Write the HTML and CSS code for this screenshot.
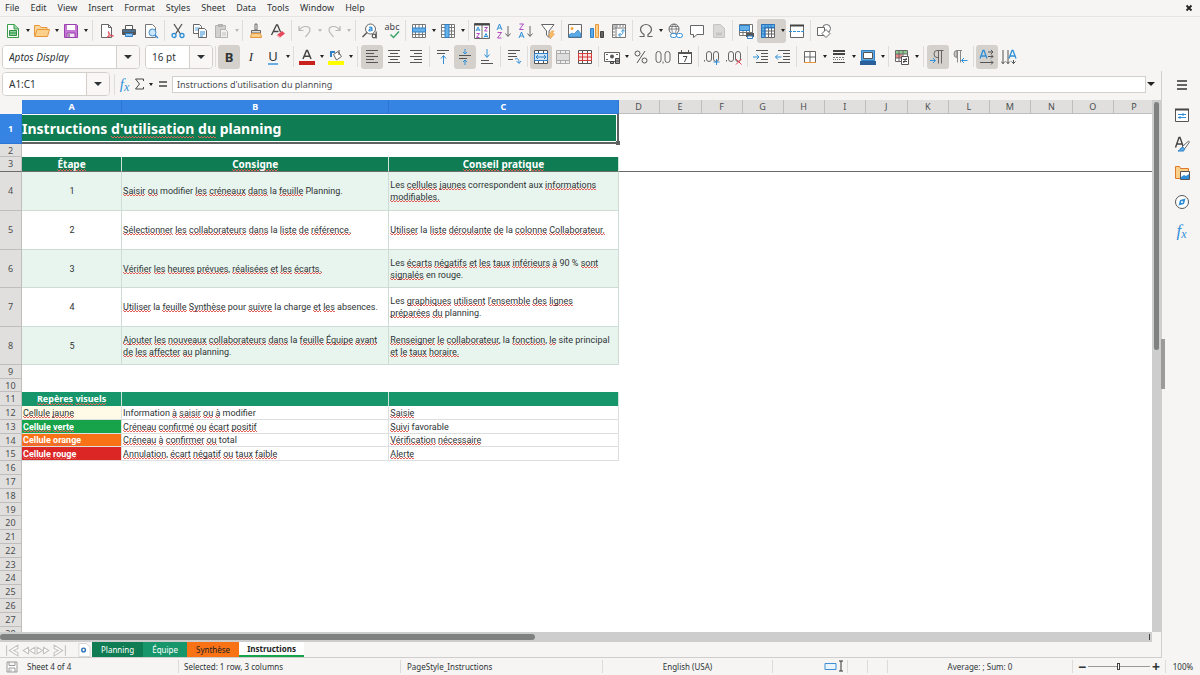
FILE: index.html
```html
<!DOCTYPE html>
<html lang="fr">
<head>
<meta charset="utf-8">
<title>Planning</title>
<link rel="stylesheet" href="styles.css">
</head>
<body>
<nav class="menubar">
<button>File</button><button>Edit</button><button>View</button><button>Insert</button><button>Format</button><button>Styles</button><button>Sheet</button><button>Data</button><button>Tools</button><button>Window</button><button>Help</button>
<button class="close" aria-label="Close"><svg class="i-close" viewBox="0 0 8 8"><path d="M1.500 1.500l5 5M6.500 1.500l-5 5" stroke="#222" stroke-width="1.800"/></svg></button>
</nav>

<div class="toolbar toolbar-standard" role="toolbar" aria-label="Standard">
<button class="tool" aria-label="New"><svg viewBox="0 0 16 16"><path d="M2.500 1.500h7l4 4v9h-11z" fill="#fff" stroke="#3a9d4b"/><path d="M9 1v5h5" fill="#9fd6a9" stroke="#3a9d4b"/><path d="M4.500 7.500h7v5h-7zM4.500 10h7" fill="#8ed09a" stroke="#2f8f43"/></svg></button><button class="drop" aria-label="New options"></button>
<button class="tool" aria-label="Open"><svg viewBox="0 0 16 16"><path d="M.5 13V2.500h5l1.500 2h6v2.500" fill="#fbd79b" stroke="#e8963a"/><path d="M.8 13.500L3 6.500h12.500l-2 7z" fill="#fbd08a" stroke="#e8963a"/></svg></button><button class="drop" aria-label="Open options"></button>
<button class="tool" aria-label="Save"><svg viewBox="0 0 16 16"><path d="M1.500 1.500h12l1 1v12h-13z" fill="#c679d4" stroke="#9a3fae"/><path d="M4 2h8v5H4z" fill="#fff"/><path d="M4 10h8v4.500H4z" fill="#f3e3f6" stroke="#9a3fae"/><path d="M6 11v3" stroke="#444"/></svg></button><button class="drop" aria-label="Save options"></button>
<span class="sep wide"></span>
<button class="tool" aria-label="Export as PDF"><svg viewBox="0 0 16 16"><path d="M2.500 1.500h7l3 3v10h-10z" fill="#fff" stroke="#666"/><path d="M9.500 1.500v3h3" fill="none" stroke="#666"/><path d="M8 14.500c3-2 2-6 1.500-6s0 4 5 4.500c-2-1-5 0-6.500 1.500z" fill="none" stroke="#e0404e"/></svg></button>
<button class="tool" aria-label="Print"><svg viewBox="0 0 16 16"><path d="M4.500 6V2.500h7V6" fill="#fff" stroke="#555"/><rect x="1" y="6" width="14" height="6" rx="1" fill="#555"/><path d="M2 8h12" stroke="#3b8fd6"/><path d="M4.500 10.500h7v3h-7z" fill="#8fc3ec" stroke="#2f7fc4"/></svg></button>
<button class="tool" aria-label="Print preview"><svg viewBox="0 0 16 16"><path d="M2.500 1.500h7l3 3v10h-10z" fill="#fff" stroke="#777"/><circle cx="9.500" cy="9.500" r="3.500" fill="#cfe6f8" stroke="#3b8fd6"/><path d="M12 12l3 3" stroke="#3b8fd6" stroke-width="1.500"/></svg></button>
<span class="sep"></span>
<button class="tool" aria-label="Cut"><svg viewBox="0 0 16 16"><path d="M4 1l6.500 10M12 1L5.500 11" stroke="#555" stroke-width="1.300" fill="none"/><circle cx="4" cy="12.500" r="2" fill="none" stroke="#2f8fd8" stroke-width="1.300"/><circle cx="12" cy="12.500" r="2" fill="none" stroke="#2f8fd8" stroke-width="1.300"/></svg></button>
<button class="tool" aria-label="Copy"><svg viewBox="0 0 16 16"><path d="M1.500 1.500h6l2 2v7h-8z" fill="#fff" stroke="#666"/><path d="M3 5h5M3 7h5" stroke="#5aa7df"/><path d="M6.500 5.500h6l2 2v7h-8z" fill="#fff" stroke="#666"/><path d="M8 9h5M8 11h5M8 13h3" stroke="#2f8fd8"/></svg></button>
<button class="tool" disabled aria-label="Paste"><svg viewBox="0 0 16 16"><path d="M1.500 2.500h10v12h-10z" fill="#d2d0ce" stroke="#b5b3b1"/><path d="M4 1h5v3H4z" fill="#b5b3b1"/><path d="M6.500 6.500h5l2 2v6h-7z" fill="#f2f1f0" stroke="#b5b3b1"/><path d="M8 10h4M8 12h4" stroke="#c3c1bf"/></svg></button><button class="drop" disabled aria-label="Paste options"></button>
<span class="sep"></span>
<button class="tool" aria-label="Clone formatting"><svg viewBox="0 0 16 16"><path d="M7 1h2v6H7z" fill="#fff" stroke="#666"/><path d="M3.500 7.500h9v2.500h-9z" fill="#ddd" stroke="#666"/><path d="M3.500 10.500h9l1 4h-11z" fill="#fbd08a" stroke="#e8963a"/></svg></button>
<button class="tool" aria-label="Clear formatting"><svg viewBox="0 0 16 16"><path d="M1.500 12L6.500 2h1l3 7M3.500 8.500h5" fill="none" stroke="#444" stroke-width="1.300"/><path d="M7 12l5-4 3 2.500-5 4z" fill="#e6485a"/><path d="M7 12l3 2.500" stroke="#f4a6ad" stroke-width="1.500"/></svg></button>
<span class="sep"></span>
<button class="tool" disabled aria-label="Undo"><svg viewBox="0 0 16 16"><path d="M2 3v4.500h4.500M2 7.500C5 2.500 13 2 13 7c0 3-2.500 4-4.500 7" fill="none" stroke="#b9b7b5" stroke-width="1.200"/></svg></button><button class="drop" disabled aria-label="Undo options"></button>
<button class="tool" disabled aria-label="Redo"><svg viewBox="0 0 16 16"><path d="M14 3v4.500H9.500M14 7.500C11 2.500 3 2 3 7c0 3 2.500 4 4.500 7" fill="none" stroke="#b9b7b5" stroke-width="1.200"/></svg></button><button class="drop" disabled aria-label="Redo options"></button>
<span class="sep wide"></span>
<button class="tool" aria-label="Find and replace"><svg viewBox="0 0 16 16"><circle cx="8.500" cy="6" r="5" fill="#fff" stroke="#666"/><path d="M5 9.500l-4.500 4.500" stroke="#555" stroke-width="1.500"/><path d="M7 4.500c2-1 3 0 3 1v2.500M10 6c-3-.5-4 2-2 2 1 0 2-.5 2-1.500" fill="none" stroke="#2f8fd8" stroke-width="1.200"/><circle cx="12" cy="13" r="1.800" fill="#f6f5f4" stroke="#555" stroke-width="1.200"/><path d="M14.200 8.500v7" stroke="#555" stroke-width="1.200"/></svg></button>
<button class="tool spelling" aria-label="Spelling"><span>abc</span><svg viewBox="0 0 16 8"><path d="M6.500 3.500l3 3L15 .5" fill="none" stroke="#3aa66a" stroke-width="1.500"/></svg></button>
<span class="sep"></span>
<button class="tool" aria-label="Row"><svg viewBox="0 0 16 16"><path d="M1.500 1.500h13v13h-13zM1.500 11.500h13M4.500 1.500v13M8 1.500v13M11.500 1.500v13" fill="#fff" stroke="#777"/><path d="M1.500 5h13v4h-13z" fill="#65b0e8" stroke="#2f80c8"/></svg></button><button class="drop" aria-label="Row options"></button>
<button class="tool" aria-label="Column"><svg viewBox="0 0 16 16"><path d="M1.500 1.500h13v13h-13zM1.500 4.500h13M1.500 8h13M1.500 11.500h13M11.500 1.500v13" fill="#fff" stroke="#777"/><path d="M5 1.500h4v13H5z" fill="#65b0e8" stroke="#2f80c8"/></svg></button><button class="drop" aria-label="Column options"></button>
<span class="sep"></span>
<button class="tool" aria-label="Sort"><svg viewBox="0 0 16 16"><path d="M.5.5h15v15H.5zM8 1v14" fill="#fff" stroke="#666"/><path d="M.5 1.500h15" stroke="#444" stroke-width="2"/><path d="M2 8l2-4 2 4M2.800 7h2.400M10 14.500l2-4 2 4M10.800 13.500h2.400" fill="none" stroke="#2f8fd8"/><path d="M2.500 10.500h3l-3 4h3M10.500 4.500h3l-3 3.500h3" fill="none" stroke="#b04bc0"/></svg></button>
<button class="tool" aria-label="Sort ascending"><svg viewBox="0 0 16 16"><path d="M1 7l2.500-6L6 7M2 5h3" fill="none" stroke="#2f8fd8"/><path d="M1.500 9.500h4l-4 5.500h4" fill="none" stroke="#b04bc0"/><path d="M12 3v10M9.500 10.500L12 13.500l2.500-3" fill="none" stroke="#666"/></svg></button>
<button class="tool" aria-label="Sort descending"><svg viewBox="0 0 16 16"><path d="M1 15l2.500-6L6 15M2 13h3" fill="none" stroke="#2f8fd8"/><path d="M1.500 1h4l-4 5.500h4" fill="none" stroke="#b04bc0"/><path d="M12 3v10M9.500 10.500L12 13.500l2.500-3" fill="none" stroke="#666"/></svg></button>
<button class="tool" aria-label="AutoFilter"><svg viewBox="0 0 16 16"><path d="M1.500 1.500h12.500L9 8v6.500L6.500 12V8z" fill="#fff" stroke="#666"/><path d="M11.500 8l-3 5h2.500l-1 3 4.500-5h-2.500l2-3z" fill="#fbc069" stroke="#e8963a" stroke-width=".6"/></svg></button>
<span class="sep"></span>
<button class="tool" aria-label="Image"><svg viewBox="0 0 16 16"><path d="M1.500 1.500h13v13h-13z" fill="#fff" stroke="#666"/><circle cx="5" cy="5.500" r="1.500" fill="#f5a742"/><path d="M2 14v-2l3-2 2 1 4-4 3 4v3z" fill="#5aabe6" stroke="#2f80c8" stroke-width=".7"/></svg></button>
<button class="tool" aria-label="Chart"><svg viewBox="0 0 16 16"><path d="M1.500 5.500h3v9h-3z" fill="#5aabe6" stroke="#2f80c8"/><path d="M6.500 1.500h3v13h-3z" fill="#fbd08a" stroke="#e8963a"/><path d="M11.500 8.500h3v6h-3z" fill="#666" stroke="#444"/></svg></button>
<button class="tool" aria-label="Pivot table"><svg viewBox="0 0 16 16"><path d="M1.500 1.500h13v13h-13zM1.500 5h13M5 1.500v13" fill="#fff" stroke="#777"/><path d="M2 3h12M3 5v9" stroke="#aaa" stroke-width="1.500" stroke-dasharray="2 1"/><path d="M8 12c4 0 4-2 4-5M10.500 8.500L12 6.500l2 2M9.500 10L7.500 12l2 2" fill="none" stroke="#2f8fd8"/></svg></button>
<span class="sep"></span>
<button class="tool" aria-label="Special character"><svg viewBox="0 0 16 16"><path d="M1.500 13.500h4.500v-2C3 9.500 2.500 8 2.500 6.500a5.500 5 0 0 1 11 0c0 1.500-.5 3-3.500 5v2h4.500" fill="none" stroke="#666" stroke-width="1.200"/></svg></button><button class="drop" aria-label="Special character options"></button>
<button class="tool" aria-label="Hyperlink"><svg viewBox="0 0 16 16"><circle cx="7" cy="6" r="5" fill="#fff" stroke="#666"/><path d="M2 6h10M3 3.500h8M7 1c-3 3-3 7 0 10M7 1c3 3 3 7 0 10" fill="none" stroke="#666" stroke-width=".8"/><rect x="3.500" y="10.500" width="6" height="4" rx="2" fill="#fff" stroke="#2f8fd8"/><rect x="9.500" y="10.500" width="6" height="4" rx="2" fill="#fff" stroke="#2f8fd8"/></svg></button>
<button class="tool" aria-label="Comment"><svg viewBox="0 0 16 16"><path d="M1.500 2.500h13v9H8l-3.500 3v-3h-3z" fill="#fff" stroke="#666"/></svg></button>
<button class="tool" disabled aria-label="Headers and footers"><svg viewBox="0 0 16 16"><path d="M2.500 1.500h7l4 4v9h-11z" fill="#dbd9d7" stroke="#c6c4c2"/><path d="M5 9.500h6v3H5z" fill="#c6c4c2"/></svg></button>
<span class="sep"></span>
<button class="tool" aria-label="Print area"><svg viewBox="0 0 16 16"><path d="M1.500 1.500h13v11h-13zM1.500 9.500h13M5 1.500v11M8.500 1.500v11M11.500 1.500v11" fill="#fff" stroke="#777"/><path d="M1.500 2.500h10v5h-10z" fill="#65b0e8" stroke="#2f80c8"/><path d="M8 10h8v4H8z" fill="#555"/><path d="M9.500 13h5v2.500h-5z" fill="#fff" stroke="#2f80c8"/></svg></button>
<span class="split on"><button class="tool" aria-label="Freeze rows and columns"><svg viewBox="0 0 16 16"><path d="M1.500 1.500h13v13h-13zM8.500 1.500v13M11.500 1.500v13M1.500 8h13M1.500 11h13" fill="#fff" stroke="#666"/><path d="M1.500 1.500h13v3H5v10H1.500z" fill="#65b0e8" stroke="#2874bb"/><path d="M5 2v12M2 5h12M8 2v3M11 2v3M2 8h3M2 11h3" stroke="#2874bb"/></svg></button><button class="drop" aria-label="Freeze options"></button></span>
<button class="tool" aria-label="Split window"><svg viewBox="0 0 16 16"><path d="M1.500 2.500h13v12h-13z" fill="#fff" stroke="#666"/><path d="M1 2.500h14" stroke="#444" stroke-width="2"/><path d="M0 8.500h16" stroke="#2f8fd8" stroke-dasharray="3 1"/></svg></button>
<span class="sep"></span>
<button class="tool" aria-label="Show draw functions"><svg viewBox="0 0 16 16"><circle cx="10.500" cy="5.500" r="4" fill="#fff" stroke="#666"/><path d="M1.500 4.500h7v8h-7z" fill="#fff" stroke="#666"/><path d="M10 6.500l4 4-4 4-4-4z" fill="#fff" stroke="#666"/></svg></button>
</div>

<div class="toolbar toolbar-format" role="toolbar" aria-label="Formatting">
<div class="combo font-name"><input aria-label="Font name" value="Aptos Display"><button aria-label="Choose font"></button></div>
<div class="combo font-size"><input aria-label="Font size" value="16 pt"><button aria-label="Choose size"></button></div>
<span class="sep"></span>
<button class="tool on letter bold">B</button>
<button class="tool letter italic">I</button>
<button class="tool letter under"><span>U</span></button><button class="drop" aria-label="Underline options"></button>
<span class="sep"></span>
<button class="tool" aria-label="Font color"><svg viewBox="0 0 16 16"><path d="M4 10L7.500 1.500h1L12 10M5.300 7.200h5.400" fill="none" stroke="#444" stroke-width="1.500"/><path d="M0 12h16v4H0z" fill="#c9211e"/></svg></button><button class="drop" aria-label="Font colors"></button>
<button class="tool" aria-label="Background color"><svg viewBox="0 0 16 16"><path d="M5.500 5.500l4.500-3 3.500 5-5 3.500z" fill="#fff" stroke="#666"/><path d="M11 1v5" stroke="#555"/><path d="M2 3h5M3 3v5" stroke="#2f80c8" stroke-width="2"/><path d="M0 12h16v4H0z" fill="#ffff00"/></svg></button><button class="drop" aria-label="Background colors"></button>
<span class="sep wide"></span>
<button class="tool on" aria-label="Align left"><svg viewBox="0 0 16 16"><path d="M2 1.500h12M2 4.500h8M2 7.500h12M2 10.500h8M2 13.500h12" stroke="#555"/></svg></button>
<button class="tool" aria-label="Center"><svg viewBox="0 0 16 16"><path d="M2 1.500h12M4 4.500h8M2 7.500h12M4 10.500h8M2 13.500h12" stroke="#555"/></svg></button>
<button class="tool" aria-label="Align right"><svg viewBox="0 0 16 16"><path d="M2 1.500h12M6 4.500h8M2 7.500h12M6 10.500h8M2 13.500h12" stroke="#555"/></svg></button>
<span class="sep"></span>
<button class="tool" aria-label="Align top"><svg viewBox="0 0 16 16"><path d="M2 1.500h12M2 4.500h8" stroke="#555"/><path d="M8.500 15V7M6 9.500l2.500-3 2.500 3" fill="none" stroke="#2f8fd8"/></svg></button>
<button class="tool on" aria-label="Center vertically"><svg viewBox="0 0 16 16"><path d="M2 6.500h12M2 9.500h8" stroke="#555"/><path d="M8 0v5M6 3l2 2 2-2M8 16v-5M6 13l2-2 2 2" fill="none" stroke="#2f8fd8"/></svg></button>
<button class="tool" aria-label="Align bottom"><svg viewBox="0 0 16 16"><path d="M2 11.500h8M2 14.500h12" stroke="#555"/><path d="M8 0v8M5.500 5.500l2.500 3 2.500-3" fill="none" stroke="#2f8fd8"/></svg></button>
<span class="sep"></span>
<button class="tool" aria-label="Wrap text"><svg viewBox="0 0 16 16"><path d="M2 1.500h12M2 4.500h8M2 7.500h9M2 10.500h5" stroke="#555"/><path d="M9 10c3-1 4 0 4 4M10.500 12l2.500 2.500 2-2.500" fill="none" stroke="#2f8fd8"/></svg></button>
<span class="sep"></span>
<button class="tool on" aria-label="Merge and center"><svg viewBox="0 0 16 16"><path d="M1.500 1.500h13v13h-13zM5.500 1.500v3M10.500 1.500v3M5.500 11v3.500M10.500 11v3.500" fill="#fff" stroke="#555"/><path d="M1.500 4.500h13v7h-13z" fill="#cfe6f8" stroke="#2f80c8"/><path d="M3 8h10M5 6L3 8l2 2M11 6l2 2-2 2" fill="none" stroke="#2f80c8"/></svg></button>
<button class="tool" disabled aria-label="Merge cells"><svg viewBox="0 0 16 16"><path d="M1.500 1.500h13v13h-13zM5.500 1.500v13M10.500 1.500v13" fill="#eee" stroke="#aaa"/><path d="M1.500 4.500h13v7h-13z" fill="#ddd" stroke="#aaa"/></svg></button>
<button class="tool" aria-label="Unmerge cells"><svg viewBox="0 0 16 16"><path d="M1.500 1.500h13v13h-13zM5.500 1.500v3M10.500 1.500v3M5.500 11v3.500M10.500 11v3.500" fill="#fff" stroke="#555"/><path d="M1.500 4.500h13v7h-13zM5.500 4.500v7M10.500 4.500v7M1.500 8h13" fill="#fbe3e3" stroke="#d23b3b"/></svg></button>
<span class="sep"></span>
<button class="tool" aria-label="Currency"><svg viewBox="0 0 16 16"><path d="M.5 3.500h15v9H.5z" fill="#fff" stroke="#666"/><circle cx="8" cy="7.500" r="2" fill="#555"/><path d="M2 5.500h2M12 5.500h2M2 10.500h2" stroke="#666"/><path d="M6.500 12.500h3v2h-3zM11.500 9.500h4v5h-4zM11.500 12h4" fill="#aaa" stroke="#444"/></svg></button><button class="drop" aria-label="Currency options"></button>
<button class="tool" aria-label="Percent"><svg viewBox="0 0 16 16"><circle cx="4.500" cy="4.500" r="2.500" fill="none" stroke="#555"/><circle cx="11.500" cy="11.500" r="2.500" fill="none" stroke="#555"/><path d="M12 2L4 14" stroke="#555"/></svg></button>
<button class="tool" aria-label="Number"><svg viewBox="0 0 16 16"><rect x="1" y="2.500" width="5" height="11" rx="2.500" fill="none" stroke="#666"/><rect x="10" y="2.500" width="5" height="11" rx="2.500" fill="none" stroke="#666"/><path d="M8 12.500v2" stroke="#666"/></svg></button>
<button class="tool" aria-label="Date"><svg viewBox="0 0 16 16"><path d="M1.500 3.500h13v11h-13z" fill="#fff" stroke="#555"/><path d="M1 4h14" stroke="#555" stroke-width="2"/><path d="M4.500 1v3M11.500 1v3" stroke="#555"/><path d="M6 7.500h4L7.500 13" fill="none" stroke="#444"/></svg></button>
<span class="sep"></span>
<button class="tool" aria-label="Add decimal place"><svg viewBox="0 0 16 16"><path d="M.5 11v1.500" stroke="#666"/><rect x="2.500" y="2.500" width="5" height="10" rx="2.500" fill="none" stroke="#666"/><rect x="9.500" y="2.500" width="5" height="10" rx="2.500" fill="none" stroke="#666"/><path d="M9.500 13h6M12.500 10v6" stroke="#2f8fd8"/></svg></button>
<button class="tool" aria-label="Delete decimal place"><svg viewBox="0 0 16 16"><path d="M.5 11v1.500" stroke="#666"/><rect x="2.500" y="2.500" width="5" height="10" rx="2.500" fill="none" stroke="#666"/><rect x="9.500" y="2.500" width="5" height="10" rx="2.500" fill="none" stroke="#666"/><path d="M10 10l5.500 5.500M15.500 10L10 15.500" stroke="#e0404e"/></svg></button>
<span class="sep"></span>
<button class="tool" aria-label="Increase indent"><svg viewBox="0 0 16 16"><path d="M3 1.500h12M8 4.500h7M8 7.500h7M8 10.500h7M3 13.500h12" stroke="#555"/><path d="M0 8h6M3.500 5.500L6 8l-2.500 2.500" fill="none" stroke="#2f8fd8"/></svg></button>
<button class="tool" aria-label="Decrease indent"><svg viewBox="0 0 16 16"><path d="M3 1.500h12M8 4.500h7M8 7.500h7M8 10.500h7M3 13.500h12" stroke="#555"/><path d="M.5 8h6M3 5.500L.5 8 3 10.500" fill="none" stroke="#2f8fd8"/></svg></button>
<span class="sep"></span>
<button class="tool" aria-label="Borders"><svg viewBox="0 0 16 16"><path d="M2.500 14V2.500h11V14M8 2.500v11M2.500 8h11" fill="#fff" stroke="#666"/><path d="M2 13.500h12" stroke="#e8963a"/></svg></button><button class="drop" aria-label="Border options"></button>
<button class="tool" aria-label="Border style"><svg viewBox="0 0 16 16"><path d="M2 2h12M2 5h12" stroke="#444" stroke-width="2"/><path d="M2 8.500h12" stroke="#777" stroke-dasharray="2 1"/><path d="M2 10.500h12" stroke="#777" stroke-dasharray="1 1"/><path d="M2 13.500h12" stroke="#444"/></svg></button><button class="drop" aria-label="Border styles"></button>
<button class="tool" aria-label="Border color"><svg viewBox="0 0 16 16"><path d="M1.500 1.500h13v10h-13z" fill="#65a9dc" stroke="#2f80c8"/><path d="M3.500 3.500h9v6h-9z" fill="#fff" stroke="#555"/><path d="M0 12h16v4H0z" fill="#2a6099"/></svg></button><button class="drop" aria-label="Border colors"></button>
<span class="sep"></span>
<button class="tool" aria-label="Conditional formatting"><svg viewBox="0 0 16 16"><path d="M1.500 1.500h12v11h-12z" fill="#fff" stroke="#666"/><path d="M2 2h11v3H2z" fill="#8ccf8f"/><path d="M2 5h6v4H2z" fill="#f08a8a"/><path d="M1.500 5h12M1.500 9h12M5 1.500v11M9 1.500v11" stroke="#666"/><path d="M7.500 7.500h7v8h-7z" fill="#fff" stroke="#555"/><path d="M9 10.500h4M9 12.500h4M12.500 9l-3 5" stroke="#444"/></svg></button><button class="drop" aria-label="Conditional options"></button>
<span class="sep wide"></span>
<button class="tool on" aria-label="Left to right"><svg viewBox="0 0 16 16"><path d="M13.500 1.500H7a3 3.500 0 0 0 0 7h1M8.500 1.500v13M11.500 1.500v13" fill="none" stroke="#666"/><path d="M0 11.500h5M3 9l2.500 2.500L3 14" fill="none" stroke="#2f8fd8"/></svg></button>
<button class="tool" aria-label="Right to left"><svg viewBox="0 0 16 16"><path d="M5 1.500a3 3.500 0 0 0 0 7z" fill="#c9c7c5" stroke="#888"/><path d="M4 1.500h6M5.500 1.500v12M8.500 1.500v12" fill="none" stroke="#888"/><path d="M9.500 11.500h6M12 9l-2.500 2.500L12 14" fill="none" stroke="#2f8fd8"/></svg></button>
<span class="sep"></span>
<button class="tool on" aria-label="Text direction left to right"><svg viewBox="0 0 16 16"><path d="M1 9.500L4 1.500h1l3 8M2 7h5" fill="none" stroke="#2f8fd8" stroke-width="1.300"/><path d="M9 3h5M12 1l2 2-2 2M9 7.500h5M12 5.500l2 2-2 2M1 13.500h13M12 11.500l2 2-2 2" fill="none" stroke="#555"/></svg></button>
<button class="tool" aria-label="Text direction top to bottom"><svg viewBox="0 0 16 16"><path d="M8 9.500L11 1.500h1l3 8M9 7h5" fill="none" stroke="#2f8fd8" stroke-width="1.300"/><path d="M2 1v14M0 12.500l2 2 2-2M7 1v14M5 12.500l2 2 2-2M12.500 11v4M10.500 12.500l2 2 2-2" fill="none" stroke="#555"/></svg></button>
</div>

<div class="workspace">
<main class="document">
<div class="formula-bar">
<div class="combo name-box"><input aria-label="Name box" value="A1:C1"><button aria-label="Named ranges"></button></div>
<span class="sep"></span>
<button class="fx" aria-label="Function wizard">f<sub>x</sub></button>
<button class="sigma" aria-label="Select function"><svg viewBox="0 0 10 12"><path d="M9 3V1H1l4 5-4 5h8V9" fill="none" stroke="#444"/></svg></button><button class="drop" aria-label="Function list"></button>
<button class="equals" aria-label="Formula"><svg viewBox="0 0 10 8"><path d="M1 2h8M1 6h8" stroke="#444" stroke-width="1.600"/></svg></button>
<input class="formula" aria-label="Input line" value="Instructions d'utilisation du planning">
<button class="drop expand" aria-label="Expand formula bar"></button>
</div>

<div class="sheet-area">
<div class="sheet">
<table>
<colgroup><col class="c-head"><col class="c-a"><col class="c-b"><col class="c-c"><col><col class="c-more"><col><col><col><col><col class="c-more"><col><col><col><col class="c-more"><col><col></colgroup>
<thead><tr><td class="corner"></td><th class="sel">A</th><th class="sel">B</th><th class="sel">C</th><th>D</th><th>E</th><th>F</th><th>G</th><th>H</th><th>I</th><th>J</th><th>K</th><th>L</th><th>M</th><th>N</th><th>O</th><th>P</th></tr></thead>
<tbody>
<tr class="r-title"><th class="sel">1</th><td class="title" colspan="3"><div class="title-fill">Instructions <span class="sp">d'utilisation</span> <span class="sp">du</span> planning</div><i class="handle"></i></td><td colspan="13"></td></tr>
<tr class="r-tight"><th>2</th><td colspan="16"></td></tr>
<tr class="r-head"><th>3</th><td><span class="sp">Étape</span></td><td><span class="sp">Consigne</span></td><td><span class="sp">Conseil</span> <span class="sp">pratique</span></td><td class="empty" colspan="13"></td></tr>
<tr class="r-step tint"><th>4</th><td>1</td><td><span class="sp">Saisir</span> <span class="sp">ou</span> modifier <span class="sp">les</span> <span class="sp">créneaux</span> <span class="sp">dans</span> la <span class="sp">feuille</span> Planning.</td><td>Les <span class="sp">cellules</span> <span class="sp">jaunes</span> correspondent aux <span class="sp">informations</span><br><span class="sp">modifiables.</span></td></tr>
<tr class="r-step"><th>5</th><td>2</td><td><span class="sp">Sélectionner</span> <span class="sp">les</span> <span class="sp">collaborateurs</span> <span class="sp">dans</span> la <span class="sp">liste</span> <span class="sp">de</span> <span class="sp">référence.</span></td><td><span class="sp">Utiliser</span> la <span class="sp">liste</span> <span class="sp">déroulante</span> <span class="sp">de</span> la <span class="sp">colonne</span> <span class="sp">Collaborateur.</span></td></tr>
<tr class="r-step short tint"><th>6</th><td>3</td><td><span class="sp">Vérifier</span> <span class="sp">les</span> <span class="sp">heures</span> <span class="sp">prévues</span>, <span class="sp">réalisées</span> <span class="sp">et</span> <span class="sp">les</span> <span class="sp">écarts.</span></td><td>Les <span class="sp">écarts</span> <span class="sp">négatifs</span> <span class="sp">et</span> <span class="sp">les</span> <span class="sp">taux</span> <span class="sp">inférieurs</span> <span class="sp">à</span> 90 % <span class="sp">sont</span><br><span class="sp">signalés</span> en rouge.</td></tr>
<tr class="r-step"><th>7</th><td>4</td><td><span class="sp">Utiliser</span> la <span class="sp">feuille</span> <span class="sp">Synthèse</span> pour <span class="sp">suivre</span> la charge <span class="sp">et</span> <span class="sp">les</span> absences.</td><td>Les <span class="sp">graphiques</span> <span class="sp">utilisent</span> <span class="sp">l'ensemble</span> <span class="sp">des</span> <span class="sp">lignes</span><br><span class="sp">préparées</span> <span class="sp">du</span> planning.</td></tr>
<tr class="r-step short tint"><th>8</th><td>5</td><td><span class="sp">Ajouter</span> <span class="sp">les</span> <span class="sp">nouveaux</span> <span class="sp">collaborateurs</span> <span class="sp">dans</span> la <span class="sp">feuille</span> <span class="sp">Équipe</span> <span class="sp">avant</span><br><span class="sp">de</span> <span class="sp">les</span> <span class="sp">affecter</span> <span class="sp">au</span> planning.</td><td><span class="sp">Renseigner</span> <span class="sp">le</span> <span class="sp">collaborateur</span>, la <span class="sp">fonction</span>, <span class="sp">le</span> site principal<br><span class="sp">et</span> <span class="sp">le</span> <span class="sp">taux</span> <span class="sp">horaire.</span></td></tr>
<tr><th>9</th></tr>
<tr class="r-tight"><th>10</th></tr>
<tr class="r-legend"><th>11</th><td><span class="sp">Repères</span> <span class="sp">visuels</span></td><td></td><td></td></tr>
<tr class="r-key"><th>12</th><td class="yellow"><span class="sp">Cellule</span> <span class="sp">jaune</span></td><td>Information <span class="sp">à</span> <span class="sp">saisir</span> <span class="sp">ou</span> <span class="sp">à</span> modifier</td><td><span class="sp">Saisie</span></td></tr>
<tr class="r-key"><th>13</th><td class="green"><span class="sp">Cellule</span> <span class="sp">verte</span></td><td><span class="sp">Créneau</span> <span class="sp">confirmé</span> <span class="sp">ou</span> <span class="sp">écart</span> <span class="sp">positif</span></td><td><span class="sp">Suivi</span> favorable</td></tr>
<tr class="r-key r-tight"><th>14</th><td class="orange"><span class="sp">Cellule</span> <span class="sp">orange</span></td><td><span class="sp">Créneau</span> <span class="sp">à</span> <span class="sp">confirmer</span> <span class="sp">ou</span> total</td><td><span class="sp">Vérification</span> <span class="sp">nécessaire</span></td></tr>
<tr class="r-key"><th>15</th><td class="red"><span class="sp">Cellule</span> <span class="sp">rouge</span></td><td><span class="sp">Annulation</span>, <span class="sp">écart</span> <span class="sp">négatif</span> <span class="sp">ou</span> <span class="sp">taux</span> <span class="sp">faible</span></td><td><span class="sp">Alerte</span></td></tr>
<tr><th>16</th></tr><tr><th>17</th></tr><tr><th>18</th></tr><tr class="r-tight"><th>19</th></tr><tr><th>20</th></tr><tr><th>21</th></tr><tr><th>22</th></tr><tr class="r-tight"><th>23</th></tr><tr><th>24</th></tr><tr><th>25</th></tr><tr><th>26</th></tr><tr><th>27</th></tr><tr><th>28</th></tr>
</tbody>
</table>
</div>
<div class="vscroll"><div class="thumb"></div></div>
<div class="hscroll"><div class="thumb"></div><i></i></div>
</div>

<div class="tabs">
<div class="tab-nav">
<button aria-label="First sheet"><svg viewBox="0 0 14 12"><path d="M1.500 1v10M12 1L4 6l8 5V8L8 6l4-2z" fill="#fff" stroke="#c4c2c0"/></svg></button>
<button aria-label="Previous sheet"><svg viewBox="0 0 14 12"><path d="M7 3L2 6l5 3zM13 3L8 6l5 3z" fill="#fff" stroke="#c4c2c0"/></svg></button>
<button aria-label="Next sheet"><svg viewBox="0 0 14 12"><path d="M1 3l5 3-5 3zM7 3l5 3-5 3z" fill="#fff" stroke="#c4c2c0"/></svg></button>
<button aria-label="Last sheet"><svg viewBox="0 0 14 12"><path d="M12.500 1v10M2 1l8 5-8 5V8l4-2-4-2z" fill="#fff" stroke="#c4c2c0"/></svg></button>
</div>
<button class="add-sheet" aria-label="Add sheet"><svg viewBox="0 0 14 14"><path d="M1 0h8l4 4v10H1z" fill="#fff" stroke="#d8d6d4"/><circle cx="6" cy="7" r="2" fill="#fff" stroke="#2a6fb5" stroke-width="1.500"/></svg></button>
<button class="tab planning">Planning</button><button class="tab equipe">Équipe</button><button class="tab synthese">Synthèse</button><button class="tab current">Instructions</button>
</div>
</main>

<aside class="sidebar">
<button aria-label="Sidebar settings"><svg viewBox="0 0 16 16"><path d="M3 4h10M3 8h10M3 12h10" stroke="#333" stroke-width="1.500"/></svg></button>
<button aria-label="Properties"><svg viewBox="0 0 16 16"><path d="M1.500 2.500h13v12h-13z" fill="#fff" stroke="#555"/><path d="M1 2.500h14" stroke="#444" stroke-width="2"/><path d="M4 7.500h8M4 10.500h8M9 6v3M6 9v3" stroke="#2f8fd8"/></svg></button>
<button aria-label="Styles"><svg viewBox="0 0 16 16"><path d="M1.500 11.500L5 1.500h1l3.500 10M2.500 8h6" fill="none" stroke="#444" stroke-width="1.400"/><path d="M8 11l6.500-6 1 1-5 7z" fill="#fff" stroke="#666"/><path d="M4 15c2 0 2-3.500 4.500-3.500s2.500 2.500 1 3.500z" fill="#5aabe6" stroke="#2f80c8"/></svg></button>
<button aria-label="Gallery"><svg viewBox="0 0 16 16"><path d="M1.500 13.500v-12h4l1 2h8v10z" fill="#fbd08a" stroke="#e07a2a"/><path d="M6.500 6.500h9v8h-9z" fill="#fff" stroke="#555"/><path d="M7 14v-2l3-2 2 1 3-2v5z" fill="#2f8fd8"/></svg></button>
<button aria-label="Navigator"><svg viewBox="0 0 16 16"><circle cx="8" cy="8" r="6.500" fill="#fff" stroke="#555"/><path d="M11.500 4.500L10 10l-5.500 1.500L6 6z" fill="#2f8fd8"/><circle cx="8" cy="8" r="1" fill="#fff"/></svg></button>
<button class="fx" aria-label="Functions">f<sub>x</sub></button>
</aside>
<div class="sidebar-grip"></div>
</div>

<footer class="status">
<svg class="i-doc" viewBox="0 0 12 12"><path d="M1 1h10v10H1zM3 1v3.500h6V1M3 11V7h6v4M5 8.500v2" fill="#fff" stroke="#999"/></svg>
<span class="s-sheet">Sheet 4 of 4</span>
<span class="s-selected">Selected: 1 row, 3 columns</span>
<span class="s-style">PageStyle_Instructions</span>
<span class="s-lang">English (USA)</span>
<span class="s-blank"></span>
<span class="s-mode"><svg class="i-mode" viewBox="0 0 20 12"><path d="M1 3.500h11v6H1z" fill="#eaf4fc" stroke="#3b8fd6"/><path d="M15 1h4M15 11h4M17 1v10" stroke="#333"/></svg></span>
<span class="s-mini"></span><span class="s-mini"></span>
<span class="s-sum">Average: ; Sum: 0</span>
<span class="s-zoom"><button aria-label="Zoom out">−</button><input type="range" min="0" max="100" value="49" aria-label="Zoom"><button aria-label="Zoom in">+</button></span>
<span class="s-percent">100%</span>
</footer>
</body>
</html>
```
FILE: styles.css
```css
* { box-sizing: border-box; }
body {
  margin: 0;
  height: 100vh;
  display: flex;
  flex-direction: column;
  overflow: hidden;
  background: #f6f5f4;
  color: #2e3436;
  font: 9px/12px "Noto Sans", sans-serif;
}
button, input { font: inherit; color: inherit; margin: 0; padding: 0; }
button { background: none; border: 0; }
svg { display: block; }

.menubar {
  display: flex;
  align-items: center;
  height: 17px;
  flex: none;
  padding-left: 5px;
  gap: 11px;
  border-bottom: 1px solid #e6e4e2;
}
.menubar .close { margin: 0 7px 0 auto; }
.i-close { width: 8px; height: 8px; }

.toolbar { display: flex; align-items: center; flex: none; padding-left: 2px; }
.toolbar-standard { height: 27px; }
.toolbar-format { height: 27px; padding-bottom: 2px; }
.sep { flex: none; width: 5px; height: 21px; background: linear-gradient(#dfdddb, #dfdddb) center / 1px 100% no-repeat; }
.sep.wide { width: 7px; }
.tool {
  flex: none;
  display: grid;
  place-items: center;
  width: 22px;
  height: 24px;
  border-radius: 3px;
}
.tool svg { width: 16px; height: 16px; }
.spelling { align-content: center; color: #444; line-height: 8px; }
.spelling svg { height: 8px; }
.on { background: #d4d1cd; border-radius: 3px; }
.split { display: flex; align-items: center; }
.drop { flex: none; width: 7px; height: 20px; display: grid; place-items: center; }
.drop::after { content: ""; border: 2px solid transparent; border-top: 3px solid #222; border-bottom: 0; }
.drop:disabled::after { border-top-color: #bbb; }

.letter { font-size: 13px; line-height: 16px; }
.bold { font-weight: 700; }
.italic { font-family: "Liberation Serif", serif; font-style: italic; }
.under span { border-bottom: 2px solid #6aaee3; line-height: 14px; }

.combo {
  display: flex;
  flex: none;
  height: 24px;
  border: 1px solid #d3d0cc;
  border-radius: 4px;
  background: #fff;
  overflow: hidden;
}
.combo input { flex: 1; min-width: 0; border: 0; padding-left: 6px; background: #fff; font-size: 10px; }
.combo button { width: 23px; display: grid; place-items: center; border-left: 1px solid #d3d0cc; background: #f8f7f6; }
.combo button::after { content: ""; border: 4px solid transparent; border-top-color: #2e3436; border-bottom: 0; }
.font-name { width: 138px; margin-right: 5px; }
.font-name input { font-style: italic; }
.font-size { width: 68px; }

.workspace { flex: 1; min-height: 0; display: flex; position: relative; }
.document { flex: 1; min-width: 0; display: flex; flex-direction: column; border-right: 1px solid #d0cecc; }

.formula-bar { display: flex; align-items: center; flex: none; height: 29px; padding: 0 5px 3px 2px; }
.name-box { width: 108px; margin-right: 2px; }
.fx { color: #2f8fd8; font: italic 15px/16px "Liberation Serif", serif; }
.fx sub { font-size: 12px; line-height: 8px; vertical-align: -2px; }
.formula-bar .fx { width: 15px; }
.sigma { width: 15px; padding: 0 2px; }
.sigma svg { width: 11px; height: 12px; }
.equals { width: 18px; padding: 0 4px; }
.equals svg { width: 10px; height: 8px; }
.formula { flex: 1; min-width: 0; height: 17px; border: 1px solid #d3d0cc; background: #fff; padding-left: 4px; color: #4a4e50; }
.expand { width: 10px; }
.expand::after { border-width: 4px 4px 0; }

.sheet-area { flex: 1; min-height: 0; display: grid; grid-template: minmax(0, 1fr) 10px / minmax(0, 1fr) 9px; }
.sheet { background: #fff; overflow: hidden; }
table { width: 1155px; table-layout: fixed; border-collapse: separate; border-spacing: 0; }
col { width: 41px; }
.c-head { width: 22px; }
.c-a { width: 100px; }
.c-b { width: 267px; }
.c-c { width: 229px; }
.c-more { width: 42px; }
tr { height: 14px; }
th, td { padding: 0; line-height: 12px; white-space: nowrap; vertical-align: middle; }
th { height: 14px; font-weight: 400; text-align: center; color: #4a4e50; background: #e1dfdd; border: solid #c0bebc; border-width: 0 1px 1px 0; }
.corner { background: #f6f5f4; }
th.sel { background: #3584e4; border-color: #2a76d2; color: #fff; font-weight: 700; }
.r-tight, .r-tight th { height: 13px; }
.r-tight th, .r-tight td { line-height: 11px; }

.r-title, .r-title th { height: 30px; }
.title { position: relative; height: 30px; background: #fff; border: solid #5e6361; border-width: 0 2px 2px 0; }
.title-fill { height: 26px; margin: 1px 1px 1px 0; background: #107c54; color: #fff; font-size: 14px; line-height: 27px; font-weight: 700; }
.handle { position: absolute; right: -3px; bottom: -3px; width: 4px; height: 4px; background: #5e6361; }
.r-head, .r-head th { height: 15px; }
.r-head th, .r-head td { border-bottom: 1px solid #6c6c6c; }
.r-head td:not(.empty) { background: #107c54; color: #fff; font-size: 10px; line-height: 13px; font-weight: 700; text-align: center; border-right: 1px solid #cfe3da; }

.r-step, .r-step th { height: 39px; }
.short, .short th { height: 38px; }
.r-step td, .r-key td { border: solid #cfdcd6; border-width: 0 1px 1px 0; padding-left: 1px; font-family: Roboto, sans-serif; }
.r-step td:nth-child(2) { text-align: center; }
.tint td { background: #e8f5ee; }

.r-legend td { background: #16966a; color: #fff; font-weight: 700; text-align: center; border-right: 1px solid #cfe3da; }
.r-key td { border-color: #dcdfe0; }
.r-key .yellow { background: #fffbe6; }
.r-key .green, .r-key .orange, .r-key .red { color: #fff; font-weight: 700; }
.r-key .green { background: #16a34a; }
.r-key .orange { background: #f97316; }
.r-key .red { background: #dc2626; }

/* spelling squiggle: a three-pixel stair repeated under the word */
.sp {
  background:
    linear-gradient(90deg, #e0605a 1px, transparent 1px) 0 calc(100% - 1px) / 3px 1px repeat-x,
    linear-gradient(90deg, transparent 1px, #e0605a 1px) 0 100% / 3px 1px repeat-x;
}

.vscroll { background: #cdcdcd; padding: 2px; }
.vscroll .thumb { width: 5px; height: 47%; border-radius: 3px; background: #7f8180; }
.hscroll { grid-column: 1; background: #cdcdcd; padding: 2px 2px 2px 0; display: flex; justify-content: space-between; }
.hscroll .thumb { width: 46.5%; height: 6px; border-radius: 3px; background: #7f8180; }
.hscroll i { width: 1px; background: #444; }

.tabs { display: flex; flex: none; height: 16px; border-bottom: 1px solid #d0cecc; }
.tab-nav { display: flex; width: 62px; margin: 1px 11px 0 5px; }
.tab-nav button { flex: 1; }
.tab-nav svg { width: 15px; height: 13px; }
.add-sheet { width: 14px; }
.add-sheet svg { width: 13px; height: 14px; }
.tab { padding: 0 9px; font-size: 8px; line-height: 14px; color: #fff; }
.tab.planning { background: #107c54; }
.tab.equipe { background: #16966a; }
.tab.synthese { background: #f97316; color: #222; }
.tab.current { background: #fff; color: #222; font-weight: 700; padding: 0 8px; border-bottom: 2px solid #16a34a; }

.sidebar { flex: none; width: 38px; display: flex; flex-direction: column; align-items: center; gap: 9px; padding: 4px 0 0 1px; }
.sidebar button { width: 20px; height: 20px; display: grid; place-items: center; }
.sidebar button:first-child { margin-bottom: 1px; }
.sidebar svg { width: 16px; height: 16px; }
.sidebar .fx { display: block; font-size: 17px; }
.sidebar-grip { position: absolute; right: 35px; top: 268px; width: 4px; height: 50px; background: #9c9b99; }

.status { display: flex; align-items: center; flex: none; height: 17px; font-size: 8px; line-height: 14px; }
.status > span { height: 13px; line-height: 13px; border-right: 1px solid #dddbd9; }
.i-doc { width: 12px; height: 12px; margin: 0 9px 0 6px; }
.s-sheet { width: 152px; }
.s-selected { width: 222px; padding-left: 5px; }
.s-style { width: 202px; padding-left: 6px; }
.s-lang { width: 170px; text-align: center; }
.s-blank { width: 45px; }
.s-mode { width: 30px; }
.i-mode { width: 20px; height: 12px; margin-left: 6px; }
.s-mini { width: 20px; }
.s-sum { flex: 1; text-align: center; }
.s-zoom { display: flex; align-items: center; width: 93px; padding: 0 3px; }
.s-zoom button { width: 12px; font-size: 14px; line-height: 12px; font-weight: 700; }
.s-zoom input { flex: 1; min-width: 0; height: 10px; appearance: none; background: linear-gradient(#999, #999) center / 100% 1px no-repeat; }
.s-zoom input::-webkit-slider-thumb { appearance: none; width: 3px; height: 7px; border: 1px solid #444; background: #fff; }
.s-percent { width: 34px; text-align: center; }
.status > .s-percent, .status > .s-blank { border-right: 0; }
```
